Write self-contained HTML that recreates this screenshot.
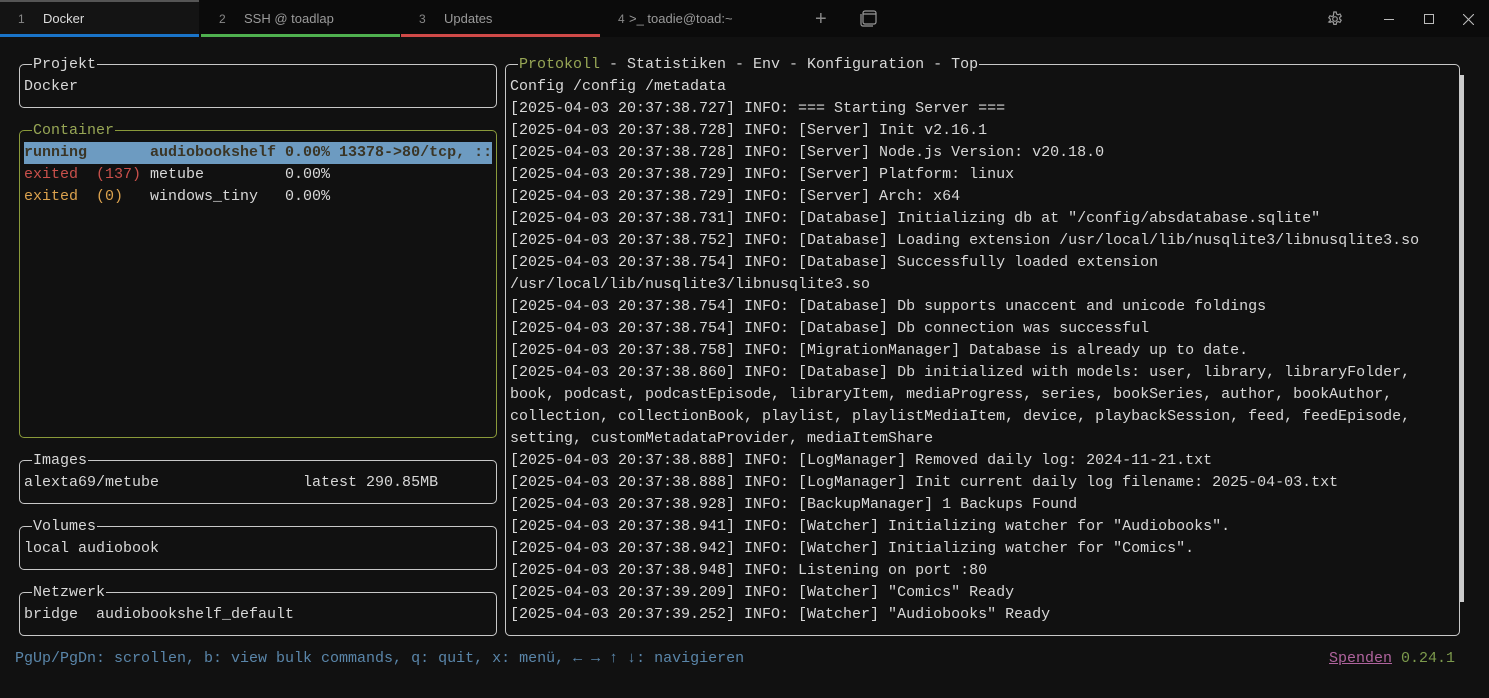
<!DOCTYPE html>
<html><head><meta charset="utf-8"><style>
*{margin:0;padding:0;box-sizing:border-box}
body{width:1489px;height:698px;background:#111;overflow:hidden;position:relative;font-family:"Liberation Mono",monospace;font-size:15px;color:#d8d8d8}
#bar{position:absolute;left:0;top:0;width:1489px;height:37px;background:#0b0b0b;font-family:"Liberation Sans",sans-serif;font-size:13px;color:#9a9a9a}
.tab{position:absolute;top:0;height:37px;width:199px}
.tab .n{position:absolute;left:18px;top:12px;font-size:12px;color:#888}
.tab .t{position:absolute;left:43px;top:11px}
.tab .u{position:absolute;left:0;bottom:0;height:3px;width:199px}
.box{position:absolute;border:1px solid #c8c8c8;border-radius:5px}
.ttl{position:absolute;top:-10px;left:12px;background:#111;line-height:20px;padding:0 1px;white-space:pre}
.ln{position:absolute;white-space:pre;line-height:22px}
</style></head><body>
<div id="bar">
 <div class="tab" style="left:0;background:#141414"><div style="position:absolute;left:0;top:0;width:199px;height:2px;background:#555"></div><span class="n">1</span><span class="t" style="color:#ddd">Docker</span><div class="u" style="background:#1a74c9"></div></div>
 <div class="tab" style="left:201px"><span class="n">2</span><span class="t">SSH @ toadlap</span><div class="u" style="background:#4fb04f"></div></div>
 <div class="tab" style="left:401px"><span class="n">3</span><span class="t">Updates</span><div class="u" style="background:#d04a48"></div></div>
 <div class="tab" style="left:601px"><span class="n" style="left:17px">4</span><span class="t" style="left:28px">&gt;_ toadie@toad:~</span></div>
 <div style="position:absolute;left:815px;top:8px;font-size:20px;color:#888">+</div>
 <svg style="position:absolute;left:860px;top:10px" width="18" height="17" viewBox="0 0 18 17" fill="none" stroke="#999" stroke-width="1.2"><rect x="3" y="1" width="13" height="13" rx="2"/><path d="M1 4v10a2 2 0 0 0 2 2h10M3 4h13"/></svg>
 <svg style="position:absolute;left:1327px;top:11px" width="16" height="16" viewBox="0 0 16 16" fill="none" stroke="#999" stroke-width="1.2"><circle cx="8" cy="8" r="2.3"/><path d="M6.8 1h2.4l.4 2 1.5.8 1.9-.8 1.2 2.1-1.5 1.3v1.6l1.5 1.3-1.2 2.1-1.9-.8-1.5.8-.4 2H6.8l-.4-2-1.5-.8-1.9.8L1.8 11l1.5-1.3V8.1L1.8 6.8 3 4.7l1.9.8 1.5-.8z"/></svg>
 <div style="position:absolute;left:1384px;top:19px;width:10px;height:1px;background:#bbb"></div>
 <div style="position:absolute;left:1424px;top:14px;width:10px;height:10px;border:1px solid #bbb"></div>
 <svg style="position:absolute;left:1463px;top:14px" width="11" height="11" viewBox="0 0 11 11" stroke="#bbb" stroke-width="1.1"><path d="M0 0L11 11M11 0L0 11"/></svg>
</div>

<div class="box" style="left:19px;top:64px;width:478px;height:44px"><div class="ttl">Projekt</div></div>
<div class="ln" style="left:24px;top:76px">Docker</div>

<div class="box" style="left:19px;top:130px;width:478px;height:308px;border-color:#8a9a3a"><div class="ttl" style="color:#97a655">Container</div></div>
<div class="ln" style="left:24px;top:142px;width:468px;height:22px;background:#6d9bc1;color:#3a3526;font-weight:bold">running       audiobookshelf 0.00% 13378-&gt;80/tcp, ::</div>
<div class="ln" style="left:24px;top:164px"><span style="color:#c9504b">exited  (137)</span> metube         0.00%</div>
<div class="ln" style="left:24px;top:186px"><span style="color:#dba24e">exited  (0)</span>   windows_tiny   0.00%</div>

<div class="box" style="left:19px;top:460px;width:478px;height:44px"><div class="ttl">Images</div></div>
<div class="ln" style="left:24px;top:472px">alexta69/metube                latest 290.85MB</div>
<div class="box" style="left:19px;top:526px;width:478px;height:44px"><div class="ttl">Volumes</div></div>
<div class="ln" style="left:24px;top:538px">local audiobook</div>
<div class="box" style="left:19px;top:592px;width:478px;height:44px"><div class="ttl">Netzwerk</div></div>
<div class="ln" style="left:24px;top:604px">bridge  audiobookshelf_default</div>

<div class="box" style="left:505px;top:64px;width:955px;height:572px"><div class="ttl"><span style="color:#97a655">Protokoll</span> - Statistiken - Env - Konfiguration - Top</div></div>
<div style="position:absolute;left:1460px;top:75px;width:4px;height:527px;background:#ccc"></div>
<div class="ln" style="left:510px;top:76px">Config /config /metadata
[2025-04-03 20:37:38.727] INFO: === Starting Server ===
[2025-04-03 20:37:38.728] INFO: [Server] Init v2.16.1
[2025-04-03 20:37:38.728] INFO: [Server] Node.js Version: v20.18.0
[2025-04-03 20:37:38.729] INFO: [Server] Platform: linux
[2025-04-03 20:37:38.729] INFO: [Server] Arch: x64
[2025-04-03 20:37:38.731] INFO: [Database] Initializing db at "/config/absdatabase.sqlite"
[2025-04-03 20:37:38.752] INFO: [Database] Loading extension /usr/local/lib/nusqlite3/libnusqlite3.so
[2025-04-03 20:37:38.754] INFO: [Database] Successfully loaded extension
/usr/local/lib/nusqlite3/libnusqlite3.so
[2025-04-03 20:37:38.754] INFO: [Database] Db supports unaccent and unicode foldings
[2025-04-03 20:37:38.754] INFO: [Database] Db connection was successful
[2025-04-03 20:37:38.758] INFO: [MigrationManager] Database is already up to date.
[2025-04-03 20:37:38.860] INFO: [Database] Db initialized with models: user, library, libraryFolder,
book, podcast, podcastEpisode, libraryItem, mediaProgress, series, bookSeries, author, bookAuthor,
collection, collectionBook, playlist, playlistMediaItem, device, playbackSession, feed, feedEpisode,
setting, customMetadataProvider, mediaItemShare
[2025-04-03 20:37:38.888] INFO: [LogManager] Removed daily log: 2024-11-21.txt
[2025-04-03 20:37:38.888] INFO: [LogManager] Init current daily log filename: 2025-04-03.txt
[2025-04-03 20:37:38.928] INFO: [BackupManager] 1 Backups Found
[2025-04-03 20:37:38.941] INFO: [Watcher] Initializing watcher for "Audiobooks".
[2025-04-03 20:37:38.942] INFO: [Watcher] Initializing watcher for "Comics".
[2025-04-03 20:37:38.948] INFO: Listening on port :80
[2025-04-03 20:37:39.209] INFO: [Watcher] "Comics" Ready
[2025-04-03 20:37:39.252] INFO: [Watcher] "Audiobooks" Ready</div>

<div class="ln" style="left:15px;top:648px;color:#5a86aa">PgUp/PgDn: scrollen, b: view bulk commands, q: quit, x: menü, ← → ↑ ↓: navigieren</div>
<div class="ln" style="left:1329px;top:648px"><span style="color:#b0649e;text-decoration:underline">Spenden</span> <span style="color:#7c9a4c">0.24.1</span></div>
</body></html>
